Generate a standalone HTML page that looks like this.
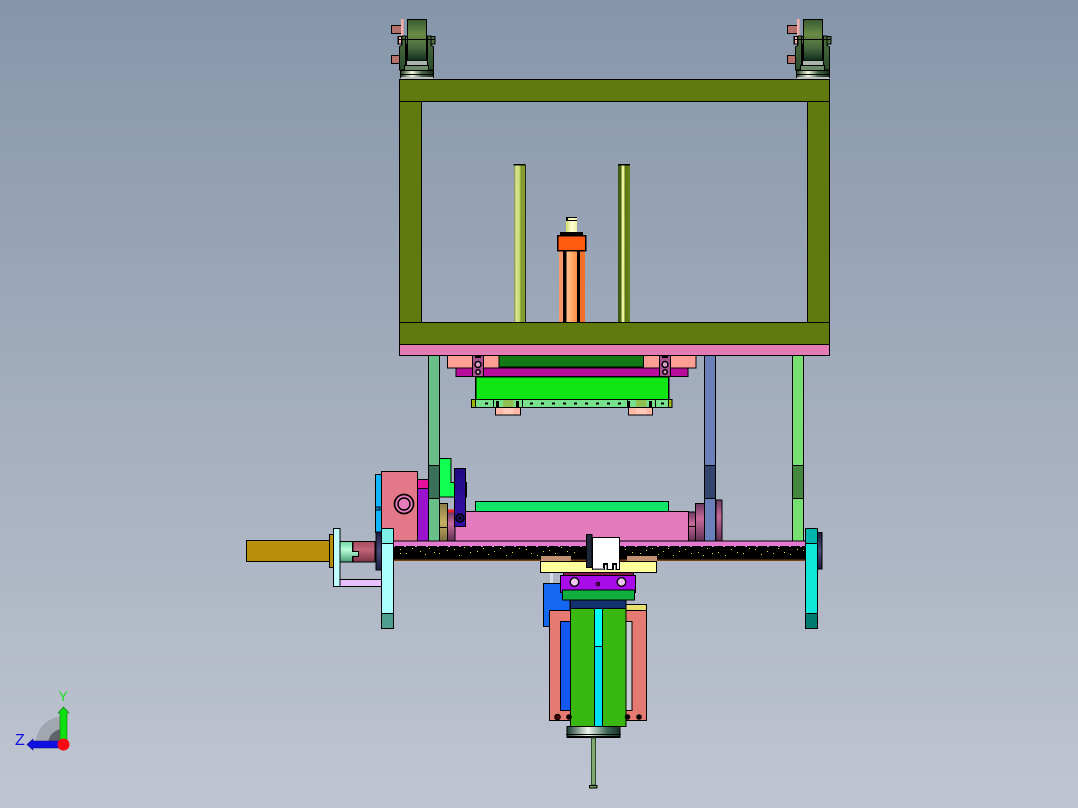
<!DOCTYPE html>
<html>
<head>
<meta charset="utf-8">
<title>CAD model</title>
<style>
html,body{margin:0;padding:0;width:1078px;height:808px;overflow:hidden}
svg{display:block}
</style>
</head>
<body>
<svg xmlns="http://www.w3.org/2000/svg" width="1078" height="808" viewBox="0 0 1078 808" shape-rendering="crispEdges">
<defs>
<linearGradient id="bg" x1="0" y1="0" x2="0" y2="1"><stop offset="0" stop-color="#8696aa"/><stop offset="1" stop-color="#c0c5d1"/></linearGradient>
<linearGradient id="wheel" x1="0" y1="0" x2="0" y2="1"><stop offset="0" stop-color="#385a34"/><stop offset=".35" stop-color="#6a8c44"/><stop offset=".7" stop-color="#44663e"/><stop offset="1" stop-color="#0e2a1a"/></linearGradient>
<linearGradient id="fork" x1="0" y1="0" x2="0" y2="1"><stop offset="0" stop-color="#4f7040"/><stop offset="1" stop-color="#2a4a2c"/></linearGradient>
<linearGradient id="base" x1="0" y1="0" x2="1" y2="0"><stop offset="0" stop-color="#1c3a20"/><stop offset=".35" stop-color="#f4f8dc"/><stop offset=".65" stop-color="#48684a"/><stop offset="1" stop-color="#14281a"/></linearGradient>
<linearGradient id="rodL" x1="0" y1="0" x2="1" y2="0"><stop offset="0" stop-color="#7a8a50"/><stop offset=".2" stop-color="#dbe690"/><stop offset=".5" stop-color="#c8d878"/><stop offset=".65" stop-color="#7f9a28"/><stop offset="1" stop-color="#8aa030"/></linearGradient>
<linearGradient id="rodR" x1="0" y1="0" x2="1" y2="0"><stop offset="0" stop-color="#3c5510"/><stop offset=".25" stop-color="#4a6414"/><stop offset=".35" stop-color="#f0f8a8"/><stop offset=".5" stop-color="#e8f098"/><stop offset=".58" stop-color="#5a7414"/><stop offset="1" stop-color="#6a8418"/></linearGradient>
<linearGradient id="cyl" x1="0" y1="0" x2="1" y2="0"><stop offset="0" stop-color="#ffe8c0"/><stop offset=".45" stop-color="#ffb070"/><stop offset="1" stop-color="#ff6210"/></linearGradient>
<linearGradient id="cylTop" x1="0" y1="0" x2="1" y2="0"><stop offset="0" stop-color="#d0d860"/><stop offset=".5" stop-color="#ffffd8"/><stop offset="1" stop-color="#f0f0a0"/></linearGradient>
<linearGradient id="rose" x1="0" y1="0" x2="0" y2="1"><stop offset="0" stop-color="#a84a60"/><stop offset=".4" stop-color="#c06478"/><stop offset="1" stop-color="#7c3446"/></linearGradient>
<linearGradient id="mint" x1="0" y1="0" x2="0" y2="1"><stop offset="0" stop-color="#6fd8a0"/><stop offset=".4" stop-color="#b8ffd8"/><stop offset="1" stop-color="#4a9a78"/></linearGradient>
<linearGradient id="mauve" x1="0" y1="0" x2="0" y2="1"><stop offset="0" stop-color="#6c3a60"/><stop offset=".4" stop-color="#c86a9c"/><stop offset="1" stop-color="#5c3052"/></linearGradient>
<linearGradient id="tan" x1="0" y1="0" x2="0" y2="1"><stop offset="0" stop-color="#8a7a48"/><stop offset=".5" stop-color="#c8b060"/><stop offset="1" stop-color="#7a6a3c"/></linearGradient>
<linearGradient id="indigo" x1="0" y1="0" x2="0" y2="1"><stop offset="0" stop-color="#1e0a80"/><stop offset="1" stop-color="#3a10a8"/></linearGradient>
<linearGradient id="disc" x1="0" y1="0" x2="1" y2="0"><stop offset="0" stop-color="#1a3a30"/><stop offset=".4" stop-color="#f0f8f0"/><stop offset=".75" stop-color="#3f6a58"/><stop offset="1" stop-color="#183028"/></linearGradient>
<linearGradient id="dark" x1="0" y1="0" x2="0" y2="1"><stop offset="0" stop-color="#1a1a40"/><stop offset=".5" stop-color="#4a4a78"/><stop offset="1" stop-color="#1a1a40"/></linearGradient>
<g id="caster" stroke="#000" stroke-width="1">
<path d="M391.500 25.500H401.500V33.500H391.500Z" fill="#b5706a"/>
<path d="M391.500 55.500H400.500V63.500H391.500Z" fill="#b5706a"/>
<rect x="401" y="19" width="2.500" height="17" fill="#f4b0a8" stroke="none"/>
<rect x="398" y="36.500" width="37" height="7.500" fill="#4f7040"/>
<rect x="398.500" y="36.500" width="3" height="7.500" fill="#f4b0a8"/>
<path d="M399.500 70V47L402 45V36H405.500V70Z" fill="url(#fork)"/>
<path d="M433.500 70V47L431 45V36H427.500V70Z" fill="url(#fork)"/>
<rect x="405" y="44" width="2" height="22" fill="#000" stroke="none"/>
<rect x="426" y="44" width="2" height="22" fill="#000" stroke="none"/>
<rect x="407.500" y="19.500" width="19" height="41.500" fill="url(#wheel)"/>
<path d="M398 39.500H435" fill="none"/>
<rect x="407" y="61" width="20" height="5" fill="#aab4ac" stroke="none"/>
<rect x="404.500" y="65.500" width="24" height="5" fill="#6a8a68"/>
<rect x="400.500" y="70.500" width="33" height="7" fill="url(#base)"/>
<path d="M400 74.500H434" fill="none"/>
<rect x="401" y="77" width="32" height="2" fill="#b8bec0" stroke="none"/>
</g>
</defs>

<rect width="1078" height="808" fill="url(#bg)"/>

<!-- casters -->
<use href="#caster"/>
<use href="#caster" x="396"/>

<!-- inner rods and cylinder -->
<rect x="514" y="164.500" width="11" height="158" fill="url(#rodL)"/>
<rect x="525" y="165" width="1" height="157" fill="#222"/>
<rect x="513.500" y="164" width="12" height="1.500" fill="#000"/>
<rect x="618" y="164.500" width="12" height="158" fill="url(#rodR)"/>
<rect x="618" y="164" width="12" height="1.500" fill="#000"/>
<rect x="566" y="218" width="11" height="15" fill="url(#cylTop)"/>
<path d="M566 217h11v1h-11zM566 218h2v2h-2zM566 220h11v.8h-11z" fill="#000"/>
<rect x="559" y="250" width="26" height="73" fill="url(#cyl)"/>
<rect x="559" y="250" width="4" height="73" fill="#f89868"/>
<rect x="580" y="250" width="5" height="73" fill="#f07028"/>
<rect x="563" y="250" width="3.300" height="73" fill="#000"/>
<rect x="577" y="250" width="3" height="73" fill="#000"/>
<rect x="560" y="232" width="23" height="3.500" fill="#000"/>
<rect x="557.500" y="235.500" width="28" height="15" fill="#ff5a10" stroke="#000" stroke-width="1.500"/>

<!-- main frame -->
<path d="M399.500 79.500H829.500V345H399.500ZM421.500 101.500V322.500H807.500V101.500Z" fill="#607a10" fill-rule="evenodd" stroke="#000" stroke-width="1"/>
<path d="M399.500 101.500H829.500M399.500 322.500H829.500" stroke="#000" stroke-width="1" fill="none"/>
<rect x="399.500" y="344.500" width="430" height="11" fill="#e37bb4" stroke="#000" stroke-width="1"/>

<!-- columns -->
<g stroke="#000" stroke-width="1">
<rect x="428.500" y="355.500" width="11" height="110" fill="#68c088"/>
<rect x="428.500" y="465.500" width="11" height="33" fill="#3a7058"/>
<rect x="428.500" y="498.500" width="11" height="43" fill="#68c088"/>
<rect x="704.500" y="355.500" width="11" height="110" fill="#6a80b8"/>
<rect x="704.500" y="465.500" width="11" height="33" fill="#33446f"/>
<rect x="704.500" y="498.500" width="11" height="43" fill="#6a80b8"/>
<rect x="792.500" y="355.500" width="11" height="110" fill="#78e070"/>
<rect x="792.500" y="465.500" width="11" height="33" fill="#448840"/>
<rect x="792.500" y="498.500" width="11" height="43" fill="#78e070"/>
</g>

<!-- upper assembly -->
<g stroke="#000" stroke-width="1">
<rect x="447.500" y="355.500" width="248.500" height="12.500" fill="#ff9e94"/>
<rect x="499" y="355.500" width="144.500" height="11.500" fill="#117a14"/>
<rect x="456" y="368" width="232" height="8.500" fill="#b90c9c"/>
<rect x="475.500" y="376.500" width="193" height="23" fill="#10e614" stroke-width="1.500"/>
<rect x="471.500" y="399.500" width="4" height="8" fill="#9ab80c"/>
<rect x="668" y="399.500" width="4" height="8" fill="#9ab80c"/>
<rect x="475.500" y="399.500" width="193" height="8" fill="#78e08c"/>
<rect x="495.500" y="407.500" width="25" height="7.500" fill="#ffb8a8"/>
<rect x="628.500" y="407.500" width="24" height="7.500" fill="#ffb8a8"/>
<rect x="472.500" y="355.500" width="11" height="21" fill="#a85090"/>
<rect x="659.500" y="355.500" width="11" height="21" fill="#a85090"/>
</g>
<rect x="503" y="400" width="10.500" height="7" fill="#90c050"/>
<rect x="636" y="400" width="10.500" height="7" fill="#90c050"/>
<rect x="503" y="408" width="10.500" height="6.500" fill="#ffc8b8"/>
<rect x="636" y="408" width="10.500" height="6.500" fill="#ffc8b8"/>
<path d="M493 400h1v7h-1zM522 400h1v7h-1zM627 400h1v7h-1zM655 400h1v7h-1z" fill="#000"/>
<g shape-rendering="auto" stroke="#000" fill="#d8a0c8" stroke-width="1.500">
<circle cx="478" cy="364.500" r="3"/><circle cx="478" cy="372" r="2.200"/>
<circle cx="665" cy="364.500" r="3"/><circle cx="665" cy="372" r="2.200"/>
</g>
<path d="M475 356h6v2h-6zM662 356h6v2h-6z" fill="#000"/>
<path d="M485 402.500h3v2h-3zM530 402.500h3v2h-3zM541 402.500h3v2h-3zM552 402.500h3v2h-3zM563 402.500h3v2h-3zM574 402.500h3v2h-3zM585 402.500h3v2h-3zM596 402.500h3v2h-3zM607 402.500h3v2h-3zM618 402.500h3v2h-3zM661 402.500h3v2h-3zM496 401h3v6h-3zM516 401h3v6h-3zM627 401h3v6h-3zM649 401h3v6h-3z" fill="#000"/>

<!-- lower left stack -->
<g stroke="#000" stroke-width="1">
<rect x="375.500" y="474.500" width="6" height="58" fill="#10b4ff"/>
<rect x="375.500" y="507" width="4.500" height="3" fill="#1080c0"/>
<rect x="417.500" y="479.500" width="11" height="10" fill="#e8109c"/>
<rect x="417.500" y="488.500" width="11" height="53" fill="#9a12cc"/>
<rect x="381.500" y="471.500" width="36" height="70" fill="#e47888"/>
<path d="M439.500 458.500H451V482.500H466.500V497H439.500Z" fill="#10ff50"/>
<rect x="439.500" y="503.500" width="8" height="38" fill="url(#tan)"/>
<path d="M440 527h7v1h-7z" fill="#000" stroke="none"/>
<rect x="447.500" y="512" width="7.500" height="29.500" fill="url(#mauve)"/>
<rect x="448" y="509.500" width="7" height="3" fill="#ee2222" stroke="none"/>
<rect x="475.500" y="501.500" width="193" height="11" fill="#10e668"/>
<rect x="455" y="511.500" width="233.500" height="30" fill="#e37bbc"/>
<rect x="454.500" y="468.500" width="11" height="58" fill="url(#indigo)"/>
<rect x="688.500" y="512" width="7" height="29.500" fill="url(#mauve)"/>
<path d="M689 526h6v1h-6z" fill="#000" stroke="none"/>
<rect x="695.500" y="503.500" width="9" height="38" fill="url(#mauve)"/>
<rect x="716" y="500" width="6" height="41.500" fill="url(#mauve)"/>
</g>
<g shape-rendering="auto">
<circle cx="404" cy="504" r="9.500" fill="#e37bbc" stroke="#000" stroke-width="1.700"/>
<circle cx="404" cy="504" r="6" fill="#e37bbc" stroke="#000" stroke-width="1.500"/>
<circle cx="460" cy="518" r="4" fill="#241070" stroke="#000" stroke-width="1.500"/>
<circle cx="460" cy="518" r="1.800" fill="#000"/>
</g>

<!-- horizontal beam -->
<rect x="393" y="541" width="413" height="5" fill="#e37bd0"/>
<rect x="393" y="540.500" width="413" height="1" fill="#000"/>
<rect x="393" y="546" width="412" height="14.500" fill="#000"/>
<path d="M393 546.500H805" stroke="#e37bd0" stroke-width="1" stroke-dasharray="2 9" fill="none"/>
<rect x="393" y="559.500" width="412" height="1.500" fill="#7a4010"/>
<path d="M400 549h1v1h-1zM406 553h1v1h-1zM412 548h1v1h-1zM400 553h1v1h-1zM420 551h1v1h-1zM425 554h1v1h-1zM429 548h1v1h-1zM434 552h1v1h-1zM439 553h1v1h-1zM447 550h1v1h-1zM454 549h1v1h-1zM459 555h1v1h-1zM464 547h1v1h-1zM470 552h1v1h-1zM477 551h1v1h-1zM483 548h1v1h-1zM488 554h1v1h-1zM494 551h1v1h-1zM500 548h1v1h-1zM506 555h1v1h-1zM512 552h1v1h-1zM519 548h1v1h-1zM526 549h1v1h-1zM531 553h1v1h-1zM537 555h1v1h-1zM543 551h1v1h-1zM549 550h1v1h-1zM555 553h1v1h-1zM561 547h1v1h-1zM567 551h1v1h-1zM574 552h1v1h-1zM625 549h1v1h-1zM632 552h1v1h-1zM640 553h1v1h-1zM646 550h1v1h-1zM652 548h1v1h-1zM658 554h1v1h-1zM663 551h1v1h-1zM668 548h1v1h-1zM673 555h1v1h-1zM679 551h1v1h-1zM685 549h1v1h-1zM691 553h1v1h-1zM698 552h1v1h-1zM703 555h1v1h-1zM707 548h1v1h-1zM712 553h1v1h-1zM718 552h1v1h-1zM725 555h1v1h-1zM731 549h1v1h-1zM737 552h1v1h-1zM743 553h1v1h-1zM749 548h1v1h-1zM755 549h1v1h-1zM761 554h1v1h-1zM767 551h1v1h-1zM773 553h1v1h-1zM778 548h1v1h-1zM784 552h1v1h-1zM790 554h1v1h-1zM797 549h1v1h-1zM803 550h1v1h-1z" fill="#e0e820"/>

<!-- shaft left -->
<g stroke="#000" stroke-width="1">
<rect x="246.500" y="540.500" width="83" height="21" fill="#b9900c"/>
<rect x="329.500" y="534.500" width="4" height="33" fill="#b9900c"/>
<rect x="340" y="579.500" width="42" height="7" fill="#e8c0ff"/>
<rect x="333.500" y="528.500" width="6.500" height="58" fill="#c0ffff"/>
<rect x="353" y="541.500" width="22" height="20.500" fill="url(#rose)"/>
<path d="M340 541.500H352.500V551.500H358.500V556.500H352.500V562H340Z" fill="url(#mint)"/>
</g>
<rect x="376" y="532" width="5.500" height="38" fill="url(#dark)" stroke="#000" stroke-width="1"/>
<g stroke="#000" stroke-width="1">
<rect x="381.500" y="528.500" width="12" height="15" fill="#7ff0e8"/>
<rect x="381.500" y="543.500" width="12" height="70" fill="#aaffff"/>
<rect x="381.500" y="613.500" width="12" height="15" fill="#4f9f90"/>
<rect x="817.500" y="532.500" width="4.500" height="36.500" fill="url(#dark)"/>
<rect x="805.500" y="528.500" width="12" height="15" fill="#00b3ad"/>
<rect x="805.500" y="543.500" width="12" height="70" fill="#0fe6d8"/>
<rect x="805.500" y="613.500" width="12" height="15" fill="#007b70"/>
</g>

<!-- center clamp -->
<rect x="550" y="573" width="3" height="10" fill="#d8dce4"/>
<g stroke="#000" stroke-width="1">
<rect x="541" y="556" width="30" height="5" fill="#c09070" stroke="none"/>
<rect x="627" y="556" width="30" height="5" fill="#c09070" stroke="none"/>
<rect x="540.500" y="561.500" width="116" height="11" fill="#ffff9c"/>
<rect x="586.500" y="534.500" width="5.500" height="33" fill="#20283c"/>
<rect x="592.500" y="537.500" width="27" height="32" fill="#fff"/>
<rect x="543.500" y="583.500" width="26.500" height="43" fill="#1468f0"/>
<rect x="626" y="604.500" width="20.500" height="6" fill="#e8e070"/>
<rect x="549.500" y="610.500" width="97" height="110" fill="#e47a72"/>
<rect x="560.500" y="621.500" width="10" height="89" fill="#1458f0"/>
<rect x="626" y="621.500" width="6" height="89" fill="#c8ccd4"/>
<rect x="563.500" y="572.500" width="70" height="4" fill="#8a1850"/>
<rect x="560.500" y="575.500" width="75" height="17" fill="#a80ce8"/>
<rect x="562.500" y="590" width="72" height="10" fill="#10b040"/>
<rect x="570.500" y="600" width="55.500" height="8.500" fill="#143070"/>
<rect x="570.500" y="608.500" width="55.500" height="118" fill="#38b810"/>
<rect x="594.500" y="608.500" width="8" height="38" fill="#00ffff"/>
<rect x="594.500" y="646.500" width="8" height="80" fill="#00e0f4"/>
</g>
<path d="M603 563h5v7h-5zM612 563h5v7h-5z" fill="#000"/>
<path d="M605 565h1.500v5h-1.500zM614 565h1.500v5h-1.500z" fill="#fff"/>
<rect x="593" y="568" width="11" height="1.500" fill="#9aa0a8"/>
<g shape-rendering="auto">
<circle cx="574.500" cy="582" r="4.300" fill="#f0c8f0" stroke="#000" stroke-width="1.400"/>
<circle cx="621.500" cy="582" r="4.300" fill="#f0c8f0" stroke="#000" stroke-width="1.400"/>
<circle cx="598" cy="584" r="1.800" fill="#700070" stroke="#000"/>
<circle cx="557.500" cy="717" r="2.800" fill="#400" stroke="#000"/>
<circle cx="569" cy="717" r="2.800" fill="#000"/>
<circle cx="627.500" cy="717" r="2.800" fill="#000"/>
<circle cx="639" cy="717" r="2.800" fill="#000"/>
</g>

<!-- lower disc and rod -->
<rect x="567" y="726.500" width="53" height="11" fill="url(#disc)" stroke="#000" stroke-width="1"/>
<rect x="566" y="734" width="55" height="1" fill="#000"/>
<rect x="567" y="736" width="53" height="1.500" fill="#000"/>
<rect x="591.500" y="738" width="4" height="47" fill="#80a870" stroke="#2a4a2a" stroke-width="1"/>
<rect x="589.500" y="785.500" width="7.500" height="2.500" fill="#6a9a50" stroke="#000" stroke-width="1"/>

<!-- triad -->
<g shape-rendering="auto">
<path d="M63 744H35.500A27.500 27.500 0 0 1 63 716.500Z" fill="#a2a6ae"/>
<path d="M63 744H48A15 15 0 0 1 63 729Z" fill="#5f636a"/>
<path d="M60 740V713H58L63.500 707 69 713H67V740Z" fill="#0fe00f" stroke="#0a7a0a" stroke-width=".6"/>
<path d="M60 741H33V739L27 744.500 33 750V748H60Z" fill="#1010e0" stroke="#0a0a90" stroke-width=".6"/>
<circle cx="63.500" cy="744.500" r="6" fill="#f80a14"/>
<text x="58.500" y="701" font-family="'Liberation Sans',sans-serif" font-size="14" fill="#20e020">Y</text>
<text x="15" y="745" font-family="'Liberation Sans',sans-serif" font-size="16" fill="#1010e0">Z</text>
</g>
</svg>
</body>
</html>
